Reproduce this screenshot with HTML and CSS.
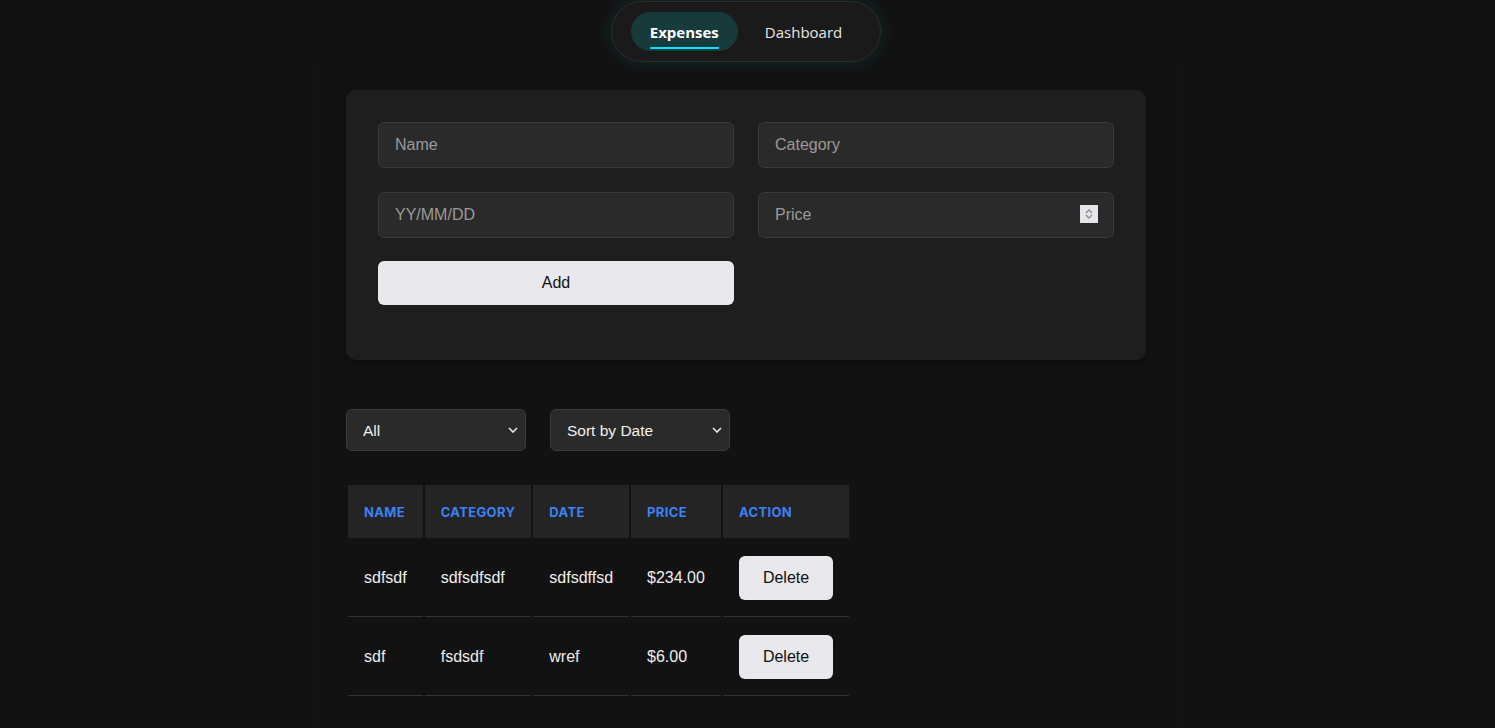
FILE: index.html
```html
<!DOCTYPE html>
<html lang="en">
<head>
<meta charset="utf-8">
<title>Expenses</title>
<link rel="stylesheet" href="styles.css">
</head>
<body>
<header class="topbar">
  <nav class="nav-pill">
    <a class="nav-tab active" href="#">Expenses</a>
    <a class="nav-tab" href="#">Dashboard</a>
  </nav>
</header>
<main class="container">
  <section class="card">
    <form class="form-grid">
      <input class="field" type="text" placeholder="Name">
      <input class="field" type="text" placeholder="Category">
      <input class="field" type="text" placeholder="YY/MM/DD">
      <div class="field-wrap">
        <input class="field" type="text" placeholder="Price">
        <span class="spinner">
          <svg width="10" height="12" viewBox="0 0 10 12"><path d="M2 5 L5 2 L8 5" fill="none" stroke="#8a8a8f" stroke-width="1.3"/><path d="M2 7 L5 10 L8 7" fill="none" stroke="#8a8a8f" stroke-width="1.3"/></svg>
        </span>
      </div>
      <button class="btn-add" type="button">Add</button>
    </form>
  </section>

  <div class="filters">
    <div class="select-wrap">
      <select class="select"><option>All</option></select>
      <svg class="chev" width="10" height="6" viewBox="0 0 10 6"><path d="M1 1 L5 5 L9 1" fill="none" stroke="#e5e5e5" stroke-width="1.6"/></svg>
    </div>
    <div class="select-wrap">
      <select class="select"><option>Sort by Date</option></select>
      <svg class="chev" width="10" height="6" viewBox="0 0 10 6"><path d="M1 1 L5 5 L9 1" fill="none" stroke="#e5e5e5" stroke-width="1.6"/></svg>
    </div>
  </div>

  <table class="expenses">
    <thead>
      <tr><th>Name</th><th>Category</th><th>Date</th><th>Price</th><th>Action</th></tr>
    </thead>
    <tbody>
      <tr><td>sdfsdf</td><td>sdfsdfsdf</td><td>sdfsdffsd</td><td>$234.00</td><td><button class="btn-del" type="button">Delete</button></td></tr>
      <tr><td>sdf</td><td>fsdsdf</td><td>wref</td><td>$6.00</td><td><button class="btn-del" type="button">Delete</button></td></tr>
    </tbody>
  </table>
</main>
</body>
</html>
```

FILE: styles.css
```css
* { box-sizing: border-box; }

html, body {
  margin: 0;
  background: #121212;
  color: #e8e8e8;
  font-family: "Liberation Sans", Arial, sans-serif;
  font-size: 16px;
  height: 100%;
}

body {
  display: flex;
  flex-direction: column;
  overflow: hidden;
  padding-right: 3px;
}

.topbar {
  display: flex;
  justify-content: center;
  padding-top: 1px;
}

.nav-pill {
  display: flex;
  gap: 8px;
  padding: 10px 19px;
  background: #1a1a1a;
  border: 1px solid #2c2c2c;
  border-radius: 31px;
  box-shadow: 0 0 18px rgba(0, 200, 210, 0.14);
}

.nav-tab {
  display: flex;
  align-items: center;
  height: 39px;
  padding: 0 19px;
  border-radius: 20px;
  font-family: "Open Sans", "Liberation Sans", sans-serif;
  font-size: 15px;
  color: #e6e6e6;
  text-decoration: none;
  position: relative;
}

.nav-tab.active {
  background: #173a3b;
  color: #ffffff;
  font-weight: 700;
}

.nav-tab.active::after {
  content: "";
  position: absolute;
  left: 19px;
  right: 19px;
  bottom: 2px;
  height: 2px;
  background: #00e5ff;
  border-radius: 1px;
}

.container {
  flex: 1;
  width: 864px;
  margin: 5px auto 0;
  padding: 23px 31px 0;
  border-left: 1px solid #161616;
  border-right: 1px solid #161616;
}

.card {
  background: #1e1e1e;
  border-radius: 10px;
  padding: 32px 32px 55px;
  box-shadow: 0 2px 8px rgba(0, 0, 0, 0.35);
}

.form-grid {
  display: grid;
  grid-template-columns: 1fr 1fr;
  column-gap: 24px;
  row-gap: 24px;
}

.field-wrap {
  position: relative;
}

.field {
  width: 100%;
  height: 46px;
  padding: 0 16px;
  background: #2a2a2a;
  border: 1px solid #3a3a3a;
  border-radius: 6px;
  color: #e8e8e8;
  font-family: "Liberation Sans", Arial, sans-serif;
  font-size: 16px;
  outline: none;
}

.field::placeholder {
  color: #9a9a9a;
}

.spinner {
  position: absolute;
  right: 16px;
  top: 13px;
  width: 18px;
  height: 18px;
  background: #e6e6ea;
  display: flex;
  align-items: center;
  justify-content: center;
}

.btn-add {
  grid-column: 1;
  height: 44px;
  margin-top: -1px;
  background: #e8e8ed;
  border: none;
  border-radius: 6px;
  color: #111;
  font-family: "Liberation Sans", Arial, sans-serif;
  font-size: 16px;
}

.filters {
  display: flex;
  gap: 24px;
  margin-top: 49px;
}

.select-wrap {
  position: relative;
  width: 180px;
}

.select {
  appearance: none;
  -webkit-appearance: none;
  width: 100%;
  height: 42px;
  padding: 0 16px;
  background: #2a2a2a;
  border: 1px solid #3a3a3a;
  border-radius: 6px;
  color: #f0f0f0;
  font-family: "Liberation Sans", Arial, sans-serif;
  font-size: 15.5px;
}

.chev {
  position: absolute;
  right: 8px;
  top: 18px;
  pointer-events: none;
}

.expenses {
  margin-top: 32px;
  border-spacing: 2px;
}

.expenses th {
  background: #242424;
  color: #3b82f6;
  font-family: "Inter", "Liberation Sans", sans-serif;
  font-size: 13px;
  font-weight: 700;
  text-transform: uppercase;
  text-align: left;
  padding: 0 16px;
  height: 53px;
  letter-spacing: 0.35px;
}

.expenses td {
  padding: 16px;
  border-bottom: 1px solid #333;
  color: #eeeeee;
  font-size: 16px;
  height: 77px;
}

.btn-del {
  height: 44px;
  padding: 0 24px;
  background: #e8e8ed;
  border: none;
  border-radius: 6px;
  color: #111;
  font-family: "Liberation Sans", Arial, sans-serif;
  font-size: 16px;
}
```
